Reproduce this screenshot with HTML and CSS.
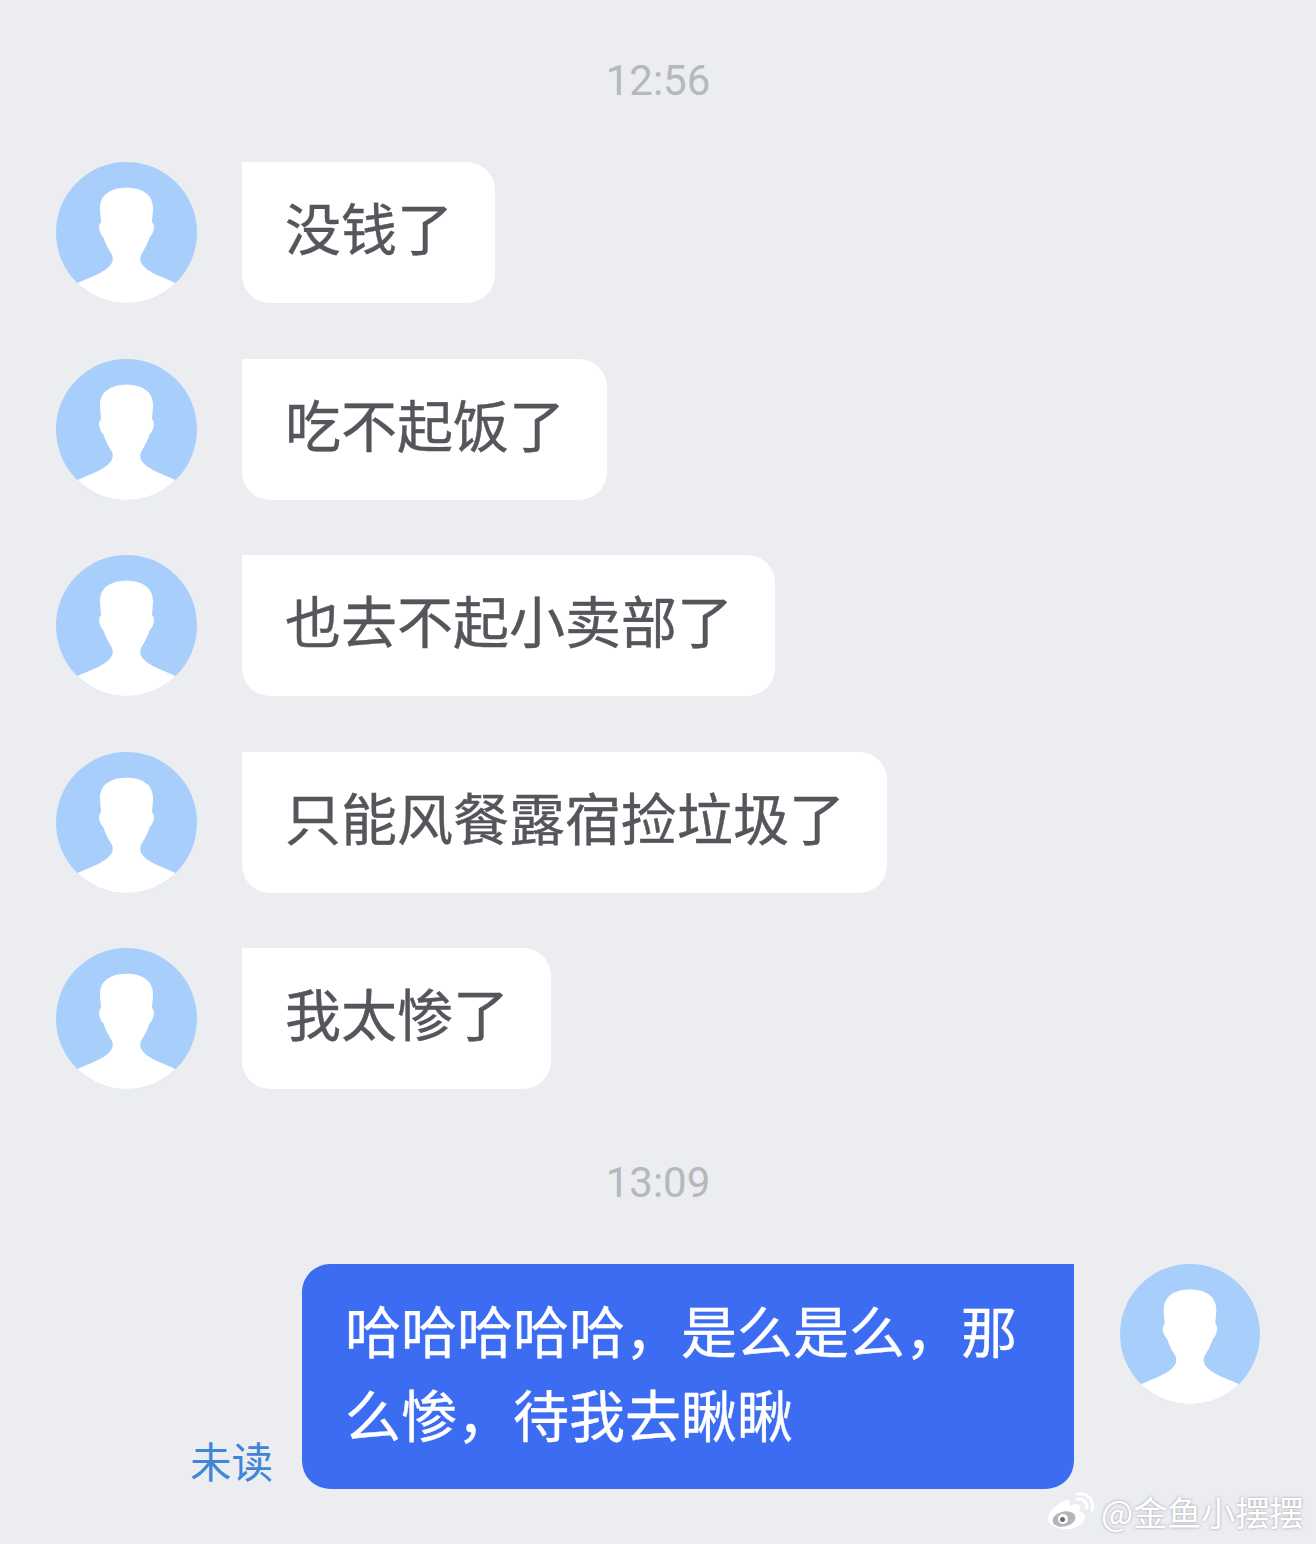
FILE: index.html
```html
<!DOCTYPE html>
<html lang="zh-CN">
<head>
<meta charset="utf-8">
<title>聊天</title>
<link rel="stylesheet" href="styles.css">
</head>
<body>
<svg class="defs" width="0" height="0">
	<defs>
		<clipPath id="round"><circle cx="70.5" cy="70.5" r="70.5"></circle></clipPath>
		<symbol id="avatar" viewBox="0 0 141 141">
			<circle cx="70.5" cy="70.5" r="70.5" fill="#a8cffb"></circle>
			<path clip-path="url(#round)" fill="#fff" d="M70.5 25.7C53 25.7 44 34 44 46C44 52 45 56 45 60C43 62 42.5 66 43.5 68C44.5 72 46 74 47.5 75.5C49 81 53 88 56 93C57.5 97 56.5 101 54 103.5C50 108 46 110 40 113L22 120.7L10 141H131L119 120.7L101 113C95 110 91 108 87 103.5C84.500 101 83.500 97 85 93C88 88 92 81 93.500 75.500C95 74 96.500 72 97.500 68C98.500 66 98 62 96 60C96 56 97 52 97 46C97 34 88 25.7 70.5 25.7Z"></path>
		</symbol>
	</defs>
</svg>
<div class="chat">
	<div class="time">12:56</div>
	<div class="group">
		<div class="row">
			<svg class="avatar"><use href="#avatar"></use></svg>
			<div class="bubble">没钱了</div>
		</div>
		<div class="row">
			<svg class="avatar"><use href="#avatar"></use></svg>
			<div class="bubble">吃不起饭了</div>
		</div>
		<div class="row">
			<svg class="avatar"><use href="#avatar"></use></svg>
			<div class="bubble">也去不起小卖部了</div>
		</div>
		<div class="row">
			<svg class="avatar"><use href="#avatar"></use></svg>
			<div class="bubble">只能风餐露宿捡垃圾了</div>
		</div>
		<div class="row">
			<svg class="avatar"><use href="#avatar"></use></svg>
			<div class="bubble">我太惨了</div>
		</div>
	</div>
	<div class="time second">13:09</div>
	<div class="row mine">
		<div class="unread">未读</div>
		<div class="bubble blue">哈哈哈哈哈，是么是么，那么惨，待我去瞅瞅</div>
		<svg class="avatar"><use href="#avatar"></use></svg>
	</div>
</div>
<div class="mark">
	<svg class="weibo" viewBox="0 0 47 38">
		<path fill="#fff" d="M19 8C10 11 0 19 0 27C0 33 9 37 18 37C29 37 37 31 37 25C37 21 33 20 31 19C33 16 32 13 30 12.500C27 11.500 24 13 21 14C22 10 22 7 19 8Z"></path>
		<ellipse cx="16" cy="27" rx="11.500" ry="7.500" transform="rotate(-12 16 27)" fill="#b4b6ba"></ellipse>
		<circle cx="15" cy="27" r="5" fill="#fff"></circle>
		<circle cx="14.500" cy="27.500" r="2.500" fill="#6a6c71"></circle>
		<path fill="none" stroke="#fff" stroke-width="3" stroke-linecap="round" d="M29 7.500C34 5.500 40 10 38.500 16M29.500 2C39 0.500 47 8 44 18"></path>
	</svg>
	<span class="mark-text">@金鱼小摆摆</span>
</div>
</body>
</html>
```

FILE: styles.css
```css
html, body { margin: 0; padding: 0; }
body { position: relative; width: 1316px; height: 1544px; overflow: hidden; background: #ebedf1; font-family: "Noto Sans CJK SC", "Noto Sans", sans-serif; }
.defs { display: block; height: 0; }
.chat { padding: 51px 56px 0; }
.time { height: 60px; font: 42px/60px Roboto, sans-serif; color: #b5b8bd; text-align: center; margin-bottom: 51px; }
.time.second { margin-top: 64px; }
.group { display: flex; flex-direction: column; gap: 55.6px; }
.row { display: flex; align-items: flex-start; gap: 45px; }
.avatar { flex: none; width: 141px; height: 141px; }
.bubble { box-sizing: border-box; height: 141px; padding: 22px 42px 0 43px; font-size: 56px; line-height: 84px; color: #55565b; -webkit-text-stroke: 0.4px #55565b; background: #fff; border-radius: 0 28px 28px 28px; white-space: nowrap; }
.mine { justify-content: flex-end; gap: 46px; position: relative; }
.mine .avatar { width: 140px; height: 140px; }
.bubble.blue { width: 772px; height: 225px; white-space: normal; padding: 23px 44px 0 43px; color: #fff; -webkit-text-stroke: 0.4px #fff; background: #3b6cf2; border-radius: 28px 0 28px 28px; }
.unread { align-self: flex-end; margin-right: -17px; margin-bottom: 1px; font-size: 41.5px; line-height: 56px; color: #3f86d8; }
.mark { position: absolute; left: 1048px; top: 1492px; display: flex; align-items: flex-start; gap: 6px; }
.weibo { width: 47px; height: 38px; }
.mark-text { font-size: 34px; line-height: 40px; color: #fff; text-shadow: 0 0 3px rgba(90, 90, 90, .55); white-space: nowrap; }
```
